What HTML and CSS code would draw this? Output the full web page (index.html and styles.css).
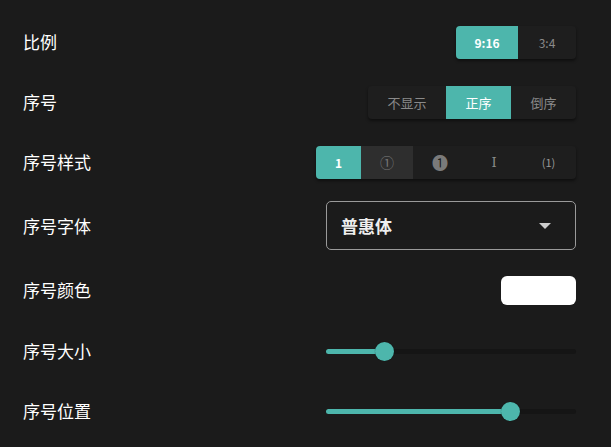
FILE: index.html
```
<!DOCTYPE html>
<html lang="zh">
<head>
<meta charset="utf-8">
<link rel="stylesheet" href="styles.css">
</head>
<body>
<div class="panel">
  <div class="row">
    <span class="label">比例</span>
    <div class="seg">
      <span class="opt active w62">9:16</span>
      <span class="opt w58">3:4</span>
    </div>
  </div>
  <div class="row">
    <span class="label">序号</span>
    <div class="seg">
      <span class="opt cjk w78">不显示</span>
      <span class="opt cjk active w65 nb">正序</span>
      <span class="opt cjk w65">倒序</span>
    </div>
  </div>
  <div class="row">
    <span class="label">序号样式</span>
    <div class="seg">
      <span class="opt active w45">1</span>
      <span class="opt hover w52 circ">①</span>
      <span class="opt w54 dark">❶</span>
      <span class="opt w54 roman">Ⅰ</span>
      <span class="opt w55 paren">(1)</span>
    </div>
  </div>
  <div class="row">
    <span class="label">序号字体</span>
    <div class="select">
      <span class="select-text">普惠体</span>
      <span class="caret"></span>
    </div>
  </div>
  <div class="row">
    <span class="label">序号颜色</span>
    <div class="swatch"></div>
  </div>
  <div class="row">
    <span class="label">序号大小</span>
    <div class="slider">
      <div class="fill" style="width:58px"></div>
      <div class="thumb" style="left:58px"></div>
    </div>
  </div>
  <div class="row">
    <span class="label">序号位置</span>
    <div class="slider">
      <div class="fill" style="width:184px"></div>
      <div class="thumb" style="left:184px"></div>
    </div>
  </div>
</div>
</body>
</html>
```
FILE: styles.css
```
html, body {
  margin: 0;
  padding: 0;
  background: #1b1b1b;
  width: 611px;
  height: 447px;
  overflow: hidden;
  font-family: "Noto Sans CJK SC", "Noto Sans", sans-serif;
}
.panel {
  display: grid;
  grid-template-rows: 60px 60px 60px 67px 62px 60px 60px;
  padding: 12px 35px 0 23px;
}
.row {
  display: flex;
  align-items: center;
  justify-content: space-between;
}
.label {
  color: #ffffff;
  font-size: 17px;
  line-height: 20px;
}
.seg {
  display: flex;
  height: 33px;
  background: #1e1e1e;
  border-radius: 4px;
  overflow: hidden;
  box-shadow: 0 2px 3px rgba(0,0,0,0.45);
}
.opt {
  display: flex;
  align-items: center;
  justify-content: center;
  color: #8a8a8a;
  font-size: 12px;
}
.opt.cjk { font-size: 13px; }
.opt.active {
  background: #4db6ac;
  color: #ffffff;
  font-weight: bold;
}
.opt.nb { font-weight: normal; }
.opt.hover { background: #2e2e2e; }
.w45 { width: 45px; }
.w52 { width: 52px; }
.w54 { width: 54px; }
.w55 { width: 55px; }
.w58 { width: 58px; }
.w62 { width: 62px; }
.w65 { width: 65px; }
.w78 { width: 78px; }
.circ { font-size: 14px; color: #777; }
.dark { font-size: 16px; color: #7a7a7a; }
.roman { font-size: 13px; color: #8a8a8a; font-family: "DejaVu Serif", serif; }
.paren { font-size: 11px; color: #999; }
.select {
  box-sizing: border-box;
  width: 250px;
  height: 49px;
  border: 1px solid #9a9a9a;
  border-radius: 5px;
  display: flex;
  align-items: center;
  justify-content: space-between;
  padding: 0 24px 0 14px;
}
.select-text {
  color: #eeeeee;
  font-size: 17px;
  font-weight: bold;
}
.caret {
  width: 0;
  height: 0;
  border-left: 6px solid transparent;
  border-right: 6px solid transparent;
  border-top: 6px solid #cccccc;
}
.swatch {
  width: 75px;
  height: 29px;
  background: #ffffff;
  border-radius: 6px;
}
.slider {
  position: relative;
  width: 250px;
  height: 5px;
  background: #151515;
  border-radius: 3px;
}
.fill {
  height: 5px;
  background: #4db6ac;
  border-radius: 3px;
}
.thumb {
  position: absolute;
  top: -7px;
  width: 19px;
  height: 19px;
  margin-left: -9.5px;
  border-radius: 50%;
  background: #4db6ac;
  box-shadow: 0 0 1px rgba(0,0,0,0.6);
}
```
